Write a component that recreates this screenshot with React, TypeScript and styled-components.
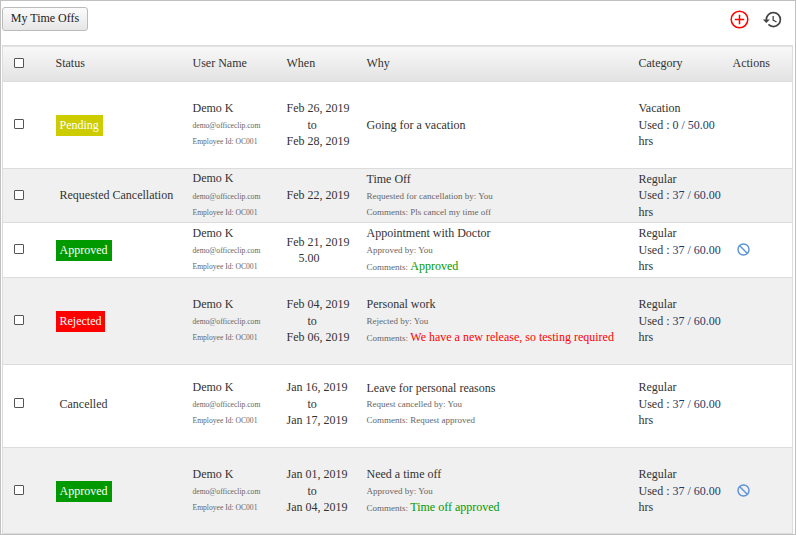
import React from 'react';
import styled, { createGlobalStyle } from 'styled-components';
import { MdHistory } from 'react-icons/md';

const GlobalStyle = createGlobalStyle`
  html, body {
    margin: 0;
    padding: 0;
    background: #fff;
  }
  body {
    font-family: 'Liberation Serif', 'Times New Roman', serif;
    font-size: 12px;
    color: #333;
  }
`;

const Page = styled.div`
  box-sizing: border-box;
  width: 796px;
  height: 535px;
  padding: 5px 3px 0 1px;
  border: 1px solid #c0c0c0;
  overflow: hidden;
`;

const Toolbar = styled.div`
  display: flex;
  align-items: center;
  justify-content: space-between;
  height: 26px;
  margin-bottom: 13px;
`;

const Button = styled.button`
  box-sizing: border-box;
  width: 86px;
  height: 24px;
  margin-top: -1px;
  padding: 0;
  border: 1px solid #bbb;
  border-radius: 3px;
  background: linear-gradient(#fbfbfb, #e6e6e6);
  font: inherit;
  color: #222;
`;

const ToolIcons = styled.div`
  display: flex;
  align-items: center;
  gap: 13px;
  padding-right: 9px;
`;

const IconSlot = styled.span`
  display: flex;
  color: #444;
`;

const Table = styled.table`
  width: 790px;
  border-collapse: collapse;
  table-layout: fixed;
`;

const HeadRow = styled.tr`
  height: 36px;
  background: linear-gradient(#f8f8f8, #e3e3e3);
  border: 1px solid #dcdcdc;
`;

const Th = styled.th`
  padding: 0;
  font-weight: normal;
  text-align: left;
  color: #333;
`;

const Row = styled.tr<{ $h: number; $shade?: boolean; $top?: number; $bottom?: number }>`
  height: ${(p) => p.$h}px;
  background: ${(p) => (p.$shade ? '#f0f0f0' : '#fff')};
  border: 1px solid #dcdcdc;
  & > td {
    padding-top: ${(p) => p.$top ?? 0}px;
    padding-bottom: ${(p) => p.$bottom ?? 0}px;
  }
`;

const Td = styled.td`
  padding: 0;
  vertical-align: middle;
  line-height: 16.5px;
`;

const CheckCell = styled.td`
  padding: 0 0 0 11px;
  vertical-align: middle;
`;

const CheckHead = styled.th`
  padding: 0 0 0 11px;
`;

const Check = styled.span`
  display: block;
  box-sizing: border-box;
  width: 10px;
  height: 10px;
  margin-bottom: 2px;
  border: 1px solid #555;
  border-radius: 1px;
  background: #fff;
`;

const Badge = styled.span<{ $color: string }>`
  display: inline-block;
  padding: 2px 4px;
  background: ${(p) => p.$color};
  color: #fff;
  line-height: 17px;
`;

const PlainStatus = styled.span`
  padding-left: 4px;
`;

const Line = styled.div<{ $indent?: number }>`
  padding-left: ${(p) => p.$indent ?? 0}px;
  white-space: nowrap;
`;

const Small = styled.div`
  font-size: 7.6px;
  line-height: 16px;
  color: #666;
  white-space: nowrap;
`;

const Email = styled(Small)`
  margin-top: 2px;
`;

const SmallWhy = styled(Small)`
  font-size: 9px;
`;

const Remark = styled.span<{ $color: string }>`
  font-size: 12px;
  color: ${(p) => p.$color};
`;

const Used = styled.span`
  color: #1f3a68;
`;

const BlockIcon = styled.svg`
  display: block;
  margin: 0 0 2px 4px;
`;

const Blocked = () => (
  <BlockIcon width="13" height="13" viewBox="0 0 13 13" fill="none" stroke="#5b92d8" strokeWidth="1.4">
    <circle cx="6.5" cy="6.5" r="5.5" />
    <line x1="2.8" y1="2.8" x2="10.2" y2="10.2" />
  </BlockIcon>
);

type Item = {
  h: number;
  top?: number;
  bottom?: number;
  status: React.ReactNode;
  dates: React.ReactNode;
  title: string;
  by?: string;
  comment?: React.ReactNode;
  cat: string;
  used: string;
  cancel?: boolean;
};

const green = '#009a00';

const items: Item[] = [
  {
    h: 87,
    status: <Badge $color="#cccc00">Pending</Badge>,
    dates: (
      <>
        <Line>Feb 26, 2019</Line>
        <Line $indent={21}>to</Line>
        <Line>Feb 28, 2019</Line>
      </>
    ),
    title: 'Going for a vacation',
    cat: 'Vacation',
    used: '0 / 50.00',
  },
  {
    h: 54,
    status: <PlainStatus>Requested Cancellation</PlainStatus>,
    dates: <Line>Feb 22, 2019</Line>,
    title: 'Time Off',
    by: 'Requested for cancellation by: You',
    comment: 'Pls cancel my time off',
    cat: 'Regular',
    used: '37 / 60.00',
  },
  {
    h: 55,
    status: <Badge $color="#009a00">Approved</Badge>,
    dates: (
      <>
        <Line>Feb 21, 2019</Line>
        <Line $indent={12}>5.00</Line>
      </>
    ),
    title: 'Appointment with Doctor',
    by: 'Approved by: You',
    comment: <Remark $color={green}>Approved</Remark>,
    cat: 'Regular',
    used: '37 / 60.00',
    cancel: true,
  },
  {
    h: 87,
    status: <Badge $color="#ff0000">Rejected</Badge>,
    dates: (
      <>
        <Line>Feb 04, 2019</Line>
        <Line $indent={21}>to</Line>
        <Line>Feb 06, 2019</Line>
      </>
    ),
    title: 'Personal work',
    by: 'Rejected by: You',
    comment: <Remark $color="#ff0000">We have a new release, so testing required</Remark>,
    cat: 'Regular',
    used: '37 / 60.00',
  },
  {
    h: 83,
    bottom: 4,
    status: <PlainStatus>Cancelled</PlainStatus>,
    dates: (
      <>
        <Line>Jan 16, 2019</Line>
        <Line $indent={21}>to</Line>
        <Line>Jan 17, 2019</Line>
      </>
    ),
    title: 'Leave for personal reasons',
    by: 'Request cancelled by: You',
    comment: 'Request approved',
    cat: 'Regular',
    used: '37 / 60.00',
  },
  {
    h: 86,
    top: 1,
    status: <Badge $color="#009a00">Approved</Badge>,
    dates: (
      <>
        <Line>Jan 01, 2019</Line>
        <Line $indent={21}>to</Line>
        <Line>Jan 04, 2019</Line>
      </>
    ),
    title: 'Need a time off',
    by: 'Approved by: You',
    comment: <Remark $color={green}>Time off approved</Remark>,
    cat: 'Regular',
    used: '37 / 60.00',
    cancel: true,
  },
];

export default function App() {
  return (
    <>
      <GlobalStyle />
      <Page>
        <Toolbar>
          <Button>My Time Offs</Button>
          <ToolIcons>
            <svg width="19" height="19" viewBox="0 0 19 19" fill="none" stroke="#ff0000" strokeWidth="1.5">
              <circle cx="9.5" cy="9.5" r="8.3" />
              <path d="M9.5 4.8v9.4M4.8 9.5h9.4" />
            </svg>
            <IconSlot>
              <MdHistory size={21} />
            </IconSlot>
          </ToolIcons>
        </Toolbar>
        <Table>
          <colgroup>
            <col width="53" />
            <col width="137" />
            <col width="94" />
            <col width="80" />
            <col width="272" />
            <col width="94" />
            <col width="60" />
          </colgroup>
          <thead>
            <HeadRow>
              <CheckHead>
                <Check />
              </CheckHead>
              <Th>Status</Th>
              <Th>User Name</Th>
              <Th>When</Th>
              <Th>Why</Th>
              <Th>Category</Th>
              <Th>Actions</Th>
            </HeadRow>
          </thead>
          <tbody>
            {items.map((item, i) => (
              <Row key={i} $h={item.h} $shade={i % 2 === 1} $top={item.top} $bottom={item.bottom}>
                <CheckCell>
                  <Check />
                </CheckCell>
                <Td>{item.status}</Td>
                <Td>
                  <Line>Demo K</Line>
                  <Email>demo@officeclip.com</Email>
                  <Small>Employee Id: OC001</Small>
                </Td>
                <Td>{item.dates}</Td>
                <Td>
                  <Line>{item.title}</Line>
                  {item.by && <SmallWhy>{item.by}</SmallWhy>}
                  {item.comment && <SmallWhy>Comments: {item.comment}</SmallWhy>}
                </Td>
                <Td>
                  <Line>{item.cat}</Line>
                  <Line>
                    Used : <Used>{item.used}</Used>
                  </Line>
                  <Line>hrs</Line>
                </Td>
                <Td>{item.cancel && <Blocked />}</Td>
              </Row>
            ))}
          </tbody>
        </Table>
      </Page>
    </>
  );
}
